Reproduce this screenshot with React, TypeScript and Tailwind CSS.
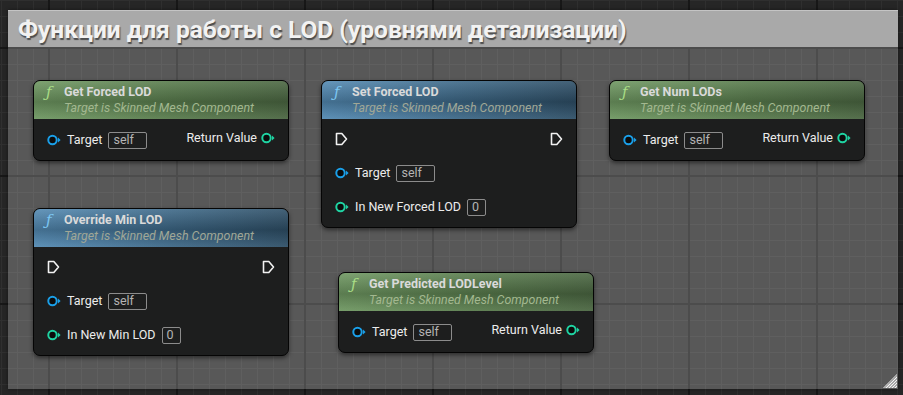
import React, { FC } from "react";

type PinKind = "object" | "int";

interface InputDef {
  label: string;
  pin: PinKind;
  value: string;
  boxW: string;
}

interface NodeDef {
  title: string;
  x: number;
  y: number;
  tint: "green" | "blue";
  exec: boolean;
  inputs: InputDef[];
  output?: string;
}

const PIN_COLOR: Record<PinKind, string> = {
  object: "#1a9fe8",
  int: "#1fd3a2",
};

const NODES: NodeDef[] = [
  {
    title: "Get Forced LOD",
    x: 25,
    y: 70,
    tint: "green",
    exec: false,
    inputs: [{ label: "Target", pin: "object", value: "self", boxW: "w-[39px]" }],
    output: "Return Value",
  },
  {
    title: "Set Forced LOD",
    x: 313,
    y: 70,
    tint: "blue",
    exec: true,
    inputs: [
      { label: "Target", pin: "object", value: "self", boxW: "w-[39px]" },
      { label: "In New Forced LOD", pin: "int", value: "0", boxW: "w-[19px]" },
    ],
  },
  {
    title: "Get Num LODs",
    x: 601,
    y: 70,
    tint: "green",
    exec: false,
    inputs: [{ label: "Target", pin: "object", value: "self", boxW: "w-[39px]" }],
    output: "Return Value",
  },
  {
    title: "Override Min LOD",
    x: 25,
    y: 198,
    tint: "blue",
    exec: true,
    inputs: [
      { label: "Target", pin: "object", value: "self", boxW: "w-[39px]" },
      { label: "In New Min LOD", pin: "int", value: "0", boxW: "w-[19px]" },
    ],
  },
  {
    title: "Get Predicted LODLevel",
    x: 330,
    y: 262,
    tint: "green",
    exec: false,
    inputs: [{ label: "Target", pin: "object", value: "self", boxW: "w-[39px]" }],
    output: "Return Value",
  },
];

const DataPin: FC<{ kind: PinKind }> = ({ kind }) => (
  <svg width="14" height="12" viewBox="0 0 14 12" className="shrink-0">
    <circle cx="5.5" cy="6" r="4.2" fill="#0c0c0c" stroke={PIN_COLOR[kind]} strokeWidth="2" />
    <polygon points="11,3.6 13.6,6 11,8.4" fill={PIN_COLOR[kind]} />
  </svg>
);

const ExecPin: FC = () => (
  <svg width="13" height="14" viewBox="0 0 13 14" className="shrink-0">
    <path
      d="M1.5 1.5 H6.8 L11.5 7 L6.8 12.5 H1.5 Z"
      fill="none"
      stroke="#f2f2f2"
      strokeWidth="1.6"
      strokeLinejoin="round"
    />
  </svg>
);

const ValueBox: FC<{ value: string; width: string }> = ({ value, width }) => (
  <div
    className={`${width} h-[17px] border border-[#8c8c8c] rounded-[2px] flex items-center px-[4px] text-[12.5px] text-[#b4b4b4] leading-none`}
  >
    {value}
  </div>
);

const InputRow: FC<{ input: InputDef }> = ({ input }) => (
  <div className="flex items-center h-[18px]">
    <DataPin kind={input.pin} />
    <span className="ml-[6px] mr-[6px] text-[12.5px] text-[#ececec]">{input.label}</span>
    <ValueBox value={input.value} width={input.boxW} />
  </div>
);

const BlueprintNode: FC<{ node: NodeDef }> = ({ node }) => {
  const header =
    node.tint === "green"
      ? "bg-[linear-gradient(180deg,rgba(255,255,255,0.10),rgba(0,0,0,0.18)_55%,rgba(255,255,255,0.06)),linear-gradient(90deg,#6f9862,#587b4c_55%,#4b6742)]"
      : "bg-[linear-gradient(180deg,rgba(255,255,255,0.10),rgba(0,0,0,0.2)_55%,rgba(255,255,255,0.06)),linear-gradient(90deg,#548bb4,#3d6887_55%,#2f5068)]";
  const fColor = node.tint === "green" ? "text-[#a9dd86]" : "text-[#7cc6f2]";
  const subColor = node.tint === "green" ? "text-[#a3b890]" : "text-[#a0a796]";

  return (
    <div
      className="absolute w-[256px] rounded-[7px] border border-[#050505] bg-[#1d1e1e] shadow-[0_2px_4px_rgba(0,0,0,0.5)] overflow-hidden"
      style={{ left: node.x, top: node.y }}
    >
      <div className={`h-[38px] pt-[3px] pl-[12px] ${header}`}>
        <div className="flex items-center leading-4">
          <span className={`w-[18px] text-[15px] italic ${fColor} font-['DejaVu_Serif',serif]`}>ƒ</span>
          <span className="text-[12.5px] font-bold text-[#dadada]">{node.title}</span>
        </div>
        <div className={`pl-[18px] leading-4 text-[12.4px] italic ${subColor}`}>
          Target is Skinned Mesh Component
        </div>
      </div>
      {node.exec ? (
        <div className="pl-[13px] pr-[13px] pt-[11px] pb-[11px] flex flex-col gap-4">
          <div className="flex items-center justify-between h-[18px]">
            <ExecPin />
            <ExecPin />
          </div>
          {node.inputs.map((input) => (
            <InputRow key={input.label} input={input} />
          ))}
        </div>
      ) : (
        <div className="pl-[13px] pr-[13px] pt-[12px] pb-[11px] flex items-center justify-between">
          <InputRow input={node.inputs[0]} />
          <div className="flex items-center h-[18px] -mt-[4px]">
            <span className="mr-[4px] text-[12.5px] text-[#ececec]">{node.output}</span>
            <DataPin kind="int" />
          </div>
        </div>
      )}
    </div>
  );
};

const ResizeGrip: FC = () => (
  <svg width="14" height="14" viewBox="0 0 14 14" className="absolute right-[1px] bottom-[1px]">
    <defs>
      <clipPath id="grip">
        <polygon points="14,0 14,14 0,14" />
      </clipPath>
    </defs>
    <g clipPath="url(#grip)" stroke="#f4f4f4" strokeWidth="1.5">
      <line x1="0" y1="17" x2="17" y2="0" />
      <line x1="-3" y1="17" x2="14" y2="0" />
      <line x1="3" y1="17" x2="20" y2="0" />
      <line x1="6" y1="17" x2="23" y2="0" />
      <line x1="9" y1="17" x2="26" y2="0" />
    </g>
  </svg>
);

export default function App() {
  return (
    <div className="w-[903px] h-[395px] overflow-hidden bg-[#262626] pt-[10px] pl-[8px] font-['Roboto',sans-serif] [background-image:linear-gradient(to_right,#171717_2px,transparent_2px),linear-gradient(to_bottom,#171717_2px,transparent_2px),linear-gradient(to_right,#2f2f2f_1px,transparent_1px),linear-gradient(to_bottom,#2f2f2f_1px,transparent_1px)] [background-size:128px_128px,128px_128px,16px_16px,16px_16px] [background-position:48px_47px,48px_47px,1px_0,1px_0]">
      <div className="relative w-[890px] h-[379px] bg-white/[0.23] shadow-[0_0_4px_rgba(0,0,0,0.45)]">
        <div className="h-[37px] bg-[#a9a9a9] border-t border-[#c4c4c4] pl-[10px] pt-[4px]">
          <h1 className="text-[24.5px] font-bold text-[#f2f2f2] leading-[30px] [text-shadow:1px_2px_1px_rgba(0,0,0,0.55)]">
            Функции для работы с LOD (уровнями детализации)
          </h1>
        </div>
        {NODES.map((node) => (
          <BlueprintNode key={node.title} node={node} />
        ))}
        <ResizeGrip />
      </div>
    </div>
  );
}
